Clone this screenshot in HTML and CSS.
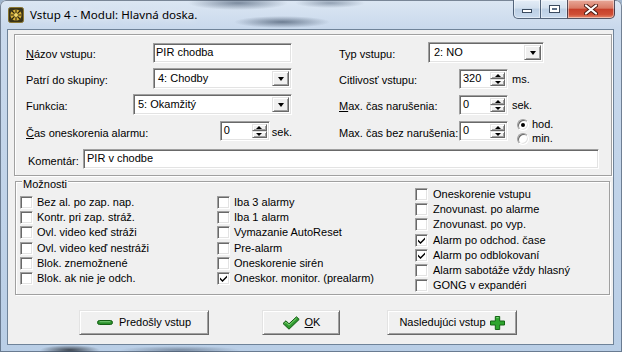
FILE: index.html
```html
<!DOCTYPE html>
<html lang="sk">

<head>
    <meta charset="UTF-8" />
    <meta name="viewport" content="width=device-width, initial-scale=1.0" />
    <title>Vstup 4 - Modul: Hlavná doska.</title>
    <link rel="stylesheet" href="styles.css">
</head>

<body>
    <div class="window">
        <!-- title bar -->
        <div class="titlebar">
            <svg class="app-icon" viewBox="0 0 16 16">
                <rect x="0.5" y="0.5" width="15" height="15" rx="2" fill="#3a3418" stroke="#8a7630" />
                <circle cx="8" cy="8" r="5.6" fill="#d8b23c" />
                <path d="M2.5 8h11M8 2.5v11M4 4l8 8M12 4l-8 8" stroke="#2e2610" stroke-width="1.1" />
                <circle cx="8" cy="8" r="2" fill="#f3d768" />
            </svg>
            <span class="title">Vstup 4 - Modul: Hlavná doska.</span>
            <div class="caption-btns">
                <div class="cap-btn cap-min"><span class="glyph-min"></span></div>
                <div class="cap-btn cap-max"><span class="glyph-max"></span></div>
                <div class="cap-btn cap-close">
                    <svg width="14" height="11" viewBox="0 0 14 11">
                        <path d="M2 1.5l10 8M12 1.5l-10 8" stroke="#4a1a12" stroke-width="4" stroke-linecap="round" />
                        <path d="M2 1.5l10 8M12 1.5l-10 8" stroke="#fff" stroke-width="2.2" stroke-linecap="round" />
                    </svg>
                </div>
            </div>
        </div>

        <div class="frame">
            <div class="client">
                <!-- upper panel -->
                <div class="panel">
                    <div class="row gap5">
                        <div class="half left">
                            <span class="lbl"><u>N</u>ázov vstupu:</span>
                            <div class="edit w139">PIR chodba</div>
                        </div>
                        <div class="half right">
                            <span class="lbl w89">Typ vstupu:</span>
                            <div class="combo w116"><span class="val pad3">2: NO</span><span class="drop"></span></div>
                        </div>
                    </div>

                    <div class="row gap5">
                        <div class="half left">
                            <span class="lbl">Patrí do skupiny:</span>
                            <div class="combo w139"><span class="val">4: Chodby</span><span class="drop"></span></div>
                        </div>
                        <div class="half right">
                            <span class="lbl w120">Citlivosť vstupu:</span>
                            <div class="spin w49"><span class="val">320</span><span class="spin-btns"><i class="up"></i><i class="down"></i></span></div>
                            <span class="unit">ms.</span>
                        </div>
                    </div>

                    <div class="row gap6">
                        <div class="half left">
                            <span class="lbl">Funkcia:</span>
                            <div class="combo w159"><span class="val">5: Okamžitý</span><span class="drop"></span></div>
                        </div>
                        <div class="half right">
                            <span class="lbl w120"><u>M</u>ax. čas narušenia:</span>
                            <div class="spin w49"><span class="val">0</span><span class="spin-btns"><i class="up"></i><i class="down"></i></span></div>
                            <span class="unit">sek.</span>
                        </div>
                    </div>

                    <div class="row gap8 h20">
                        <div class="half left">
                            <span class="lbl"><u>Č</u>as oneskorenia alarmu:</span>
                            <div class="field-group">
                                <div class="spin w50"><span class="val">0</span><span class="spin-btns"><i class="up"></i><i class="down"></i></span></div>
                                <span class="unit tight">sek.</span>
                            </div>
                        </div>
                        <div class="half right">
                            <span class="lbl w120">Max. čas bez narušenia:</span>
                            <div class="spin w49"><span class="val">0</span><span class="spin-btns"><i class="up"></i><i class="down"></i></span></div>
                            <div class="radios">
                                <div class="radio-row"><span class="radio on"></span>hod.</div>
                                <div class="radio-row"><span class="radio"></span>min.</div>
                            </div>
                        </div>
                    </div>

                    <div class="row h20">
                        <span class="lbl comment-lbl">Komentár:</span>
                        <div class="edit w516 pad3">PIR v chodbe</div>
                    </div>
                </div>

                <!-- options group -->
                <div class="group">
                    <span class="group-title">Možnosti</span>
                    <div class="group-cols">
                        <div class="col col1">
                            <div class="chk"><span class="box"></span>Bez al. po zap. nap.</div>
                            <div class="chk"><span class="box"></span>Kontr. pri zap. stráž.</div>
                            <div class="chk"><span class="box"></span>Ovl. video keď stráži</div>
                            <div class="chk"><span class="box"></span>Ovl. video keď nestráži</div>
                            <div class="chk"><span class="box"></span>Blok. znemožnené</div>
                            <div class="chk"><span class="box"></span>Blok. ak nie je odch.</div>
                        </div>
                        <div class="col col2">
                            <div class="chk"><span class="box"></span>Iba 3 alarmy</div>
                            <div class="chk"><span class="box"></span>Iba 1 alarm</div>
                            <div class="chk"><span class="box"></span>Vymazanie AutoReset</div>
                            <div class="chk"><span class="box"></span>Pre-alarm</div>
                            <div class="chk"><span class="box"></span>Oneskorenie sirén</div>
                            <div class="chk"><span class="box"><svg viewBox="0 0 7 7"><path d="M0 2.5L2.5 5L7 0.5V2.5L2.5 7L0 4.5Z" /></svg></span>Oneskor. monitor. (prealarm)</div>
                        </div>
                        <div class="col col3">
                            <div class="chk"><span class="box"></span>Oneskorenie vstupu</div>
                            <div class="chk"><span class="box"></span>Znovunast. po alarme</div>
                            <div class="chk"><span class="box"></span>Znovunast. po vyp.</div>
                            <div class="chk"><span class="box"><svg viewBox="0 0 7 7"><path d="M0 2.5L2.5 5L7 0.5V2.5L2.5 7L0 4.5Z" /></svg></span>Alarm po odchod. čase</div>
                            <div class="chk"><span class="box"><svg viewBox="0 0 7 7"><path d="M0 2.5L2.5 5L7 0.5V2.5L2.5 7L0 4.5Z" /></svg></span>Alarm po odblokovaní</div>
                            <div class="chk"><span class="box"></span>Alarm sabotáže vždy hlasný</div>
                            <div class="chk"><span class="box"></span>GONG v expandéri</div>
                        </div>
                    </div>
                </div>

                <!-- bottom buttons -->
                <div class="button-row">
                    <div class="btn btn-wide">
                        <svg width="16" height="5" viewBox="0 0 16 5">
                            <rect x="0.5" y="0.5" width="15" height="4" rx="2" fill="#2a8f2a" stroke="#156015" />
                            <rect x="2.5" y="1.2" width="11" height="1.1" rx="0.5" fill="#7fd07f" />
                        </svg>
                        <span>Predošly vstup</span>
                    </div>
                    <div class="btn btn-ok">
                        <svg width="18" height="14" viewBox="0 0 18 14">
                            <path d="M1 7.5L4 4.8L7 7.8L14.5 0.8L17.2 3.4L7 13.2Z" fill="#2f9a2f" stroke="#145c14" stroke-linejoin="round" />
                            <path d="M2.6 7.5L4 6.3L7 9.2L14.5 2.2" stroke="#8fdc7f" stroke-width="0.9" fill="none" />
                        </svg>
                        <span><u>O</u>K</span>
                    </div>
                    <div class="btn btn-wide btn-next">
                        <span>Nasledujúci vstup</span>
                        <svg width="15" height="14" viewBox="0 0 15 14">
                            <path d="M5.3 0.5h4.4v4.5h4.8v4h-4.8v4.5H5.3V9H0.5V5h4.8z" fill="#2ea52e" stroke="#146514" stroke-linejoin="round" />
                            <path d="M6.3 1.6h2.4" stroke="#8fe08f" stroke-width="0.9" />
                        </svg>
                    </div>
                </div>
            </div>
        </div>
    </div>
</body>

</html>
```

FILE: styles.css
```css
* {
    box-sizing: border-box;
}

html,
body {
    height: 100%;
    margin: 0;
    overflow: hidden;
}

body {
    font-family: "Liberation Sans", Arial, sans-serif;
    font-size: 11px;
    line-height: 13px;
    color: #000;
    background-color: #9fb4cc;
}

/* window chrome */
.window {
    width: 622px;
    height: 352px;
    display: flex;
    flex-direction: column;
    border-radius: 6px 6px 0 0;
    background:
        radial-gradient(ellipse 50px 7px at 238px 3px, rgba(60, 78, 102, 0.6), transparent),
        radial-gradient(ellipse 35px 5px at 330px 3px, rgba(60, 78, 102, 0.45), transparent),
        radial-gradient(ellipse 48px 6px at 282px 22px, rgba(45, 62, 85, 0.6), transparent),
        radial-gradient(ellipse 30px 5px at 70px 350px, rgba(30, 36, 44, 0.8), transparent),
        radial-gradient(ellipse 60px 4px at 180px 350px, rgba(60, 75, 95, 0.5), transparent),
        linear-gradient(180deg, #dce7f3 0%, #c9d9ec 28px, #b9cee6 100%);
    box-shadow: inset 0 0 0 1px rgba(40, 55, 75, 0.55);
}

.titlebar {
    flex: none;
    height: 29px;
    display: flex;
    align-items: flex-start;
}

.app-icon {
    flex: none;
    width: 16px;
    height: 16px;
    margin: 7px 0 0 8px;
}

.title {
    margin-left: 6px;
    font-family: "Noto Sans", "Open Sans", sans-serif;
    font-size: 11.6px;
    line-height: 29px;
    text-shadow: 0 0 8px rgba(255, 255, 255, 0.9);
}

.caption-btns {
    margin-left: auto;
    margin-right: 7px;
    display: flex;
    height: 19px;
}

.cap-btn {
    height: 19px;
    display: flex;
    align-items: center;
    justify-content: center;
    border: 1px solid rgba(38, 56, 82, 0.75);
    border-top: none;
    box-shadow: inset 0 0 0 1px rgba(255, 255, 255, 0.45);
    background: linear-gradient(180deg, #e4edf7 0%, #d3e0ee 45%, #bccfe4 50%, #c9daee 100%);
}

.cap-min {
    width: 27px;
    border-right: none;
    border-radius: 0 0 0 5px;
    align-items: flex-end;
    padding-bottom: 5px;
}

.cap-max {
    width: 27px;
    border-right: none;
}

.cap-close {
    width: 48px;
    border-radius: 0 0 5px 0;
    background: linear-gradient(180deg, #e8a99a 0%, #d97b66 45%, #c7402b 52%, #cf4e35 80%, #e7896c 100%);
}

.glyph-min {
    width: 10px;
    height: 4px;
    background-color: #fff;
    border: 1px solid #3b4b60;
}

.glyph-max {
    width: 11px;
    height: 8px;
    border: 1px solid #3b4b60;
    background-color: #5d7088;
    box-shadow: inset 0 0 0 2px #fff;
}

.frame {
    flex: 1;
    display: flex;
    padding: 0 8px 7px 7px;
}

.client {
    flex: 1;
    display: flex;
    flex-direction: column;
    border: 1px solid #6f8399;
    background-color: #f0f0f0;
}

/* upper panel */
.panel {
    width: 598px;
    height: 142px;
    margin: 4px 0 0 6px;
    padding: 7px 0 0 11px;
    border: 1px solid #a0a0a0;
    box-shadow: inset 1px 1px #fff, 1px 1px #fff;
}

.row {
    display: flex;
    align-items: center;
    height: 21px;
}

.row.h20 {
    height: 20px;
}

.gap5 {
    margin-bottom: 5px;
}

.gap6 {
    margin-bottom: 6px;
}

.gap8 {
    margin-bottom: 8px;
}

.half {
    display: flex;
    align-items: center;
    height: 100%;
}

.half.left {
    width: 266px;
    justify-content: space-between;
}

.half.right {
    margin-left: 47px;
}

.lbl {
    flex: none;
    padding-top: 4px;
    white-space: nowrap;
}

.w89 {
    width: 89px;
}

.w120 {
    width: 120px;
}

.comment-lbl {
    width: 57px;
    padding-left: 2px;
}

.field-group {
    display: flex;
    align-items: center;
}

.unit {
    margin-left: 4px;
    padding-top: 2px;
}

.unit.tight {
    margin-left: 2px;
}

/* sunken classic fields */
.edit,
.combo,
.spin {
    display: flex;
    background-color: #fff;
    border: 1px solid;
    border-color: #a0a0a0 #fff #fff #a0a0a0;
    box-shadow: inset 1px 1px #696969, inset -1px -1px #e3e3e3;
    white-space: nowrap;
}

.edit {
    height: 20px;
    align-items: center;
    padding: 0 0 1px 2px;
}

.edit.pad3 {
    padding-left: 3px;
}

.combo {
    height: 21px;
    padding: 2px 2px 2px 1px;
}

.combo .val {
    flex: 1;
    padding: 1px 0 0 3px;
}

.combo .val.pad3 {
    padding-left: 4px;
}

.spin {
    height: 20px;
    padding: 2px 2px 2px 1px;
}

.spin .val {
    flex: 1;
    padding-left: 2px;
    line-height: 13px;
}

.w49 {
    width: 49px;
}

.w50 {
    width: 50px;
}

.w116 {
    width: 116px;
}

.w139 {
    width: 139px;
}

.w159 {
    width: 159px;
}

.w516 {
    width: 516px;
}

/* raised button parts */
.drop,
.spin-btns i {
    display: flex;
    align-items: center;
    justify-content: center;
    background-color: #f0f0f0;
    border: 1px solid;
    border-color: #e3e3e3 #696969 #696969 #e3e3e3;
    box-shadow: inset 1px 1px #fff, inset -1px -1px #a0a0a0;
}

.drop {
    width: 17px;
}

.drop::after {
    content: "";
    border-left: 3.5px solid transparent;
    border-right: 3.5px solid transparent;
    border-top: 4px solid #000;
    margin-top: 1px;
}

.spin-btns {
    width: 15px;
    display: flex;
    flex-direction: column;
}

.spin-btns i {
    flex: 1;
}

.spin-btns .up::after {
    content: "";
    border-left: 3px solid transparent;
    border-right: 3px solid transparent;
    border-bottom: 3px solid #000;
}

.spin-btns .down::after {
    content: "";
    border-left: 3px solid transparent;
    border-right: 3px solid transparent;
    border-top: 3px solid #000;
}

/* radio buttons */
.radios {
    margin-left: 9px;
    display: flex;
    flex-direction: column;
}

.radio-row {
    display: flex;
    align-items: center;
    height: 14px;
    padding-top: 1px;
}

.radio {
    width: 12px;
    height: 12px;
    margin-right: 3px;
    border-radius: 50%;
    border: 1px solid;
    border-color: #a0a0a0 #fff #fff #a0a0a0;
    box-shadow: inset 1px 1px #696969, inset -1px -1px #e3e3e3;
    background-color: #fff;
    display: flex;
    align-items: center;
    justify-content: center;
}

.radio.on::after {
    content: "";
    width: 4px;
    height: 4px;
    border-radius: 50%;
    background-color: #000;
}

/* options group */
.group {
    width: 595px;
    height: 114px;
    margin: 5px 0 0 7px;
    display: flex;
    flex-direction: column;
    border: 1px solid #a0a0a0;
    box-shadow: inset 1px 1px #fff, 1px 1px #fff;
}

.group-title {
    align-self: flex-start;
    height: 14px;
    line-height: 14px;
    margin: -5px 0 -4px 6px;
    padding: 0 1px;
    background-color: #f0f0f0;
}

.group-cols {
    display: flex;
}

.col1 {
    width: 201px;
    padding: 8px 0 0 4px;
}

.col2 {
    width: 198px;
    padding-top: 8px;
}

.col3 {
    flex: 1;
}

.chk {
    display: flex;
    align-items: center;
    height: 15.2px;
    white-space: nowrap;
}

.box {
    flex: none;
    width: 13px;
    height: 13px;
    margin-right: 4px;
    display: flex;
    align-items: center;
    justify-content: center;
    background-color: #fff;
    border: 1px solid;
    border-color: #a0a0a0 #fff #fff #a0a0a0;
    box-shadow: inset 1px 1px #696969, inset -1px -1px #e3e3e3;
}

.col3 .box {
    margin-right: 5px;
}

.box svg {
    width: 7px;
    height: 7px;
    fill: #000;
}

/* bottom buttons */
.button-row {
    display: flex;
    margin-top: 15px;
    padding-left: 71px;
}

.btn {
    height: 25px;
    display: flex;
    align-items: center;
    justify-content: center;
    gap: 6px;
    background-color: #f0f0f0;
    border: 1px solid;
    border-color: #e3e3e3 #696969 #696969 #e3e3e3;
    box-shadow: inset 1px 1px #fff, inset -1px -1px #a0a0a0;
    white-space: nowrap;
}

.btn-wide {
    width: 130px;
}

.btn-ok {
    width: 78px;
    margin-left: 53px;
    gap: 5px;
}

.btn-next {
    margin-left: 47px;
    gap: 4px;
}
```
